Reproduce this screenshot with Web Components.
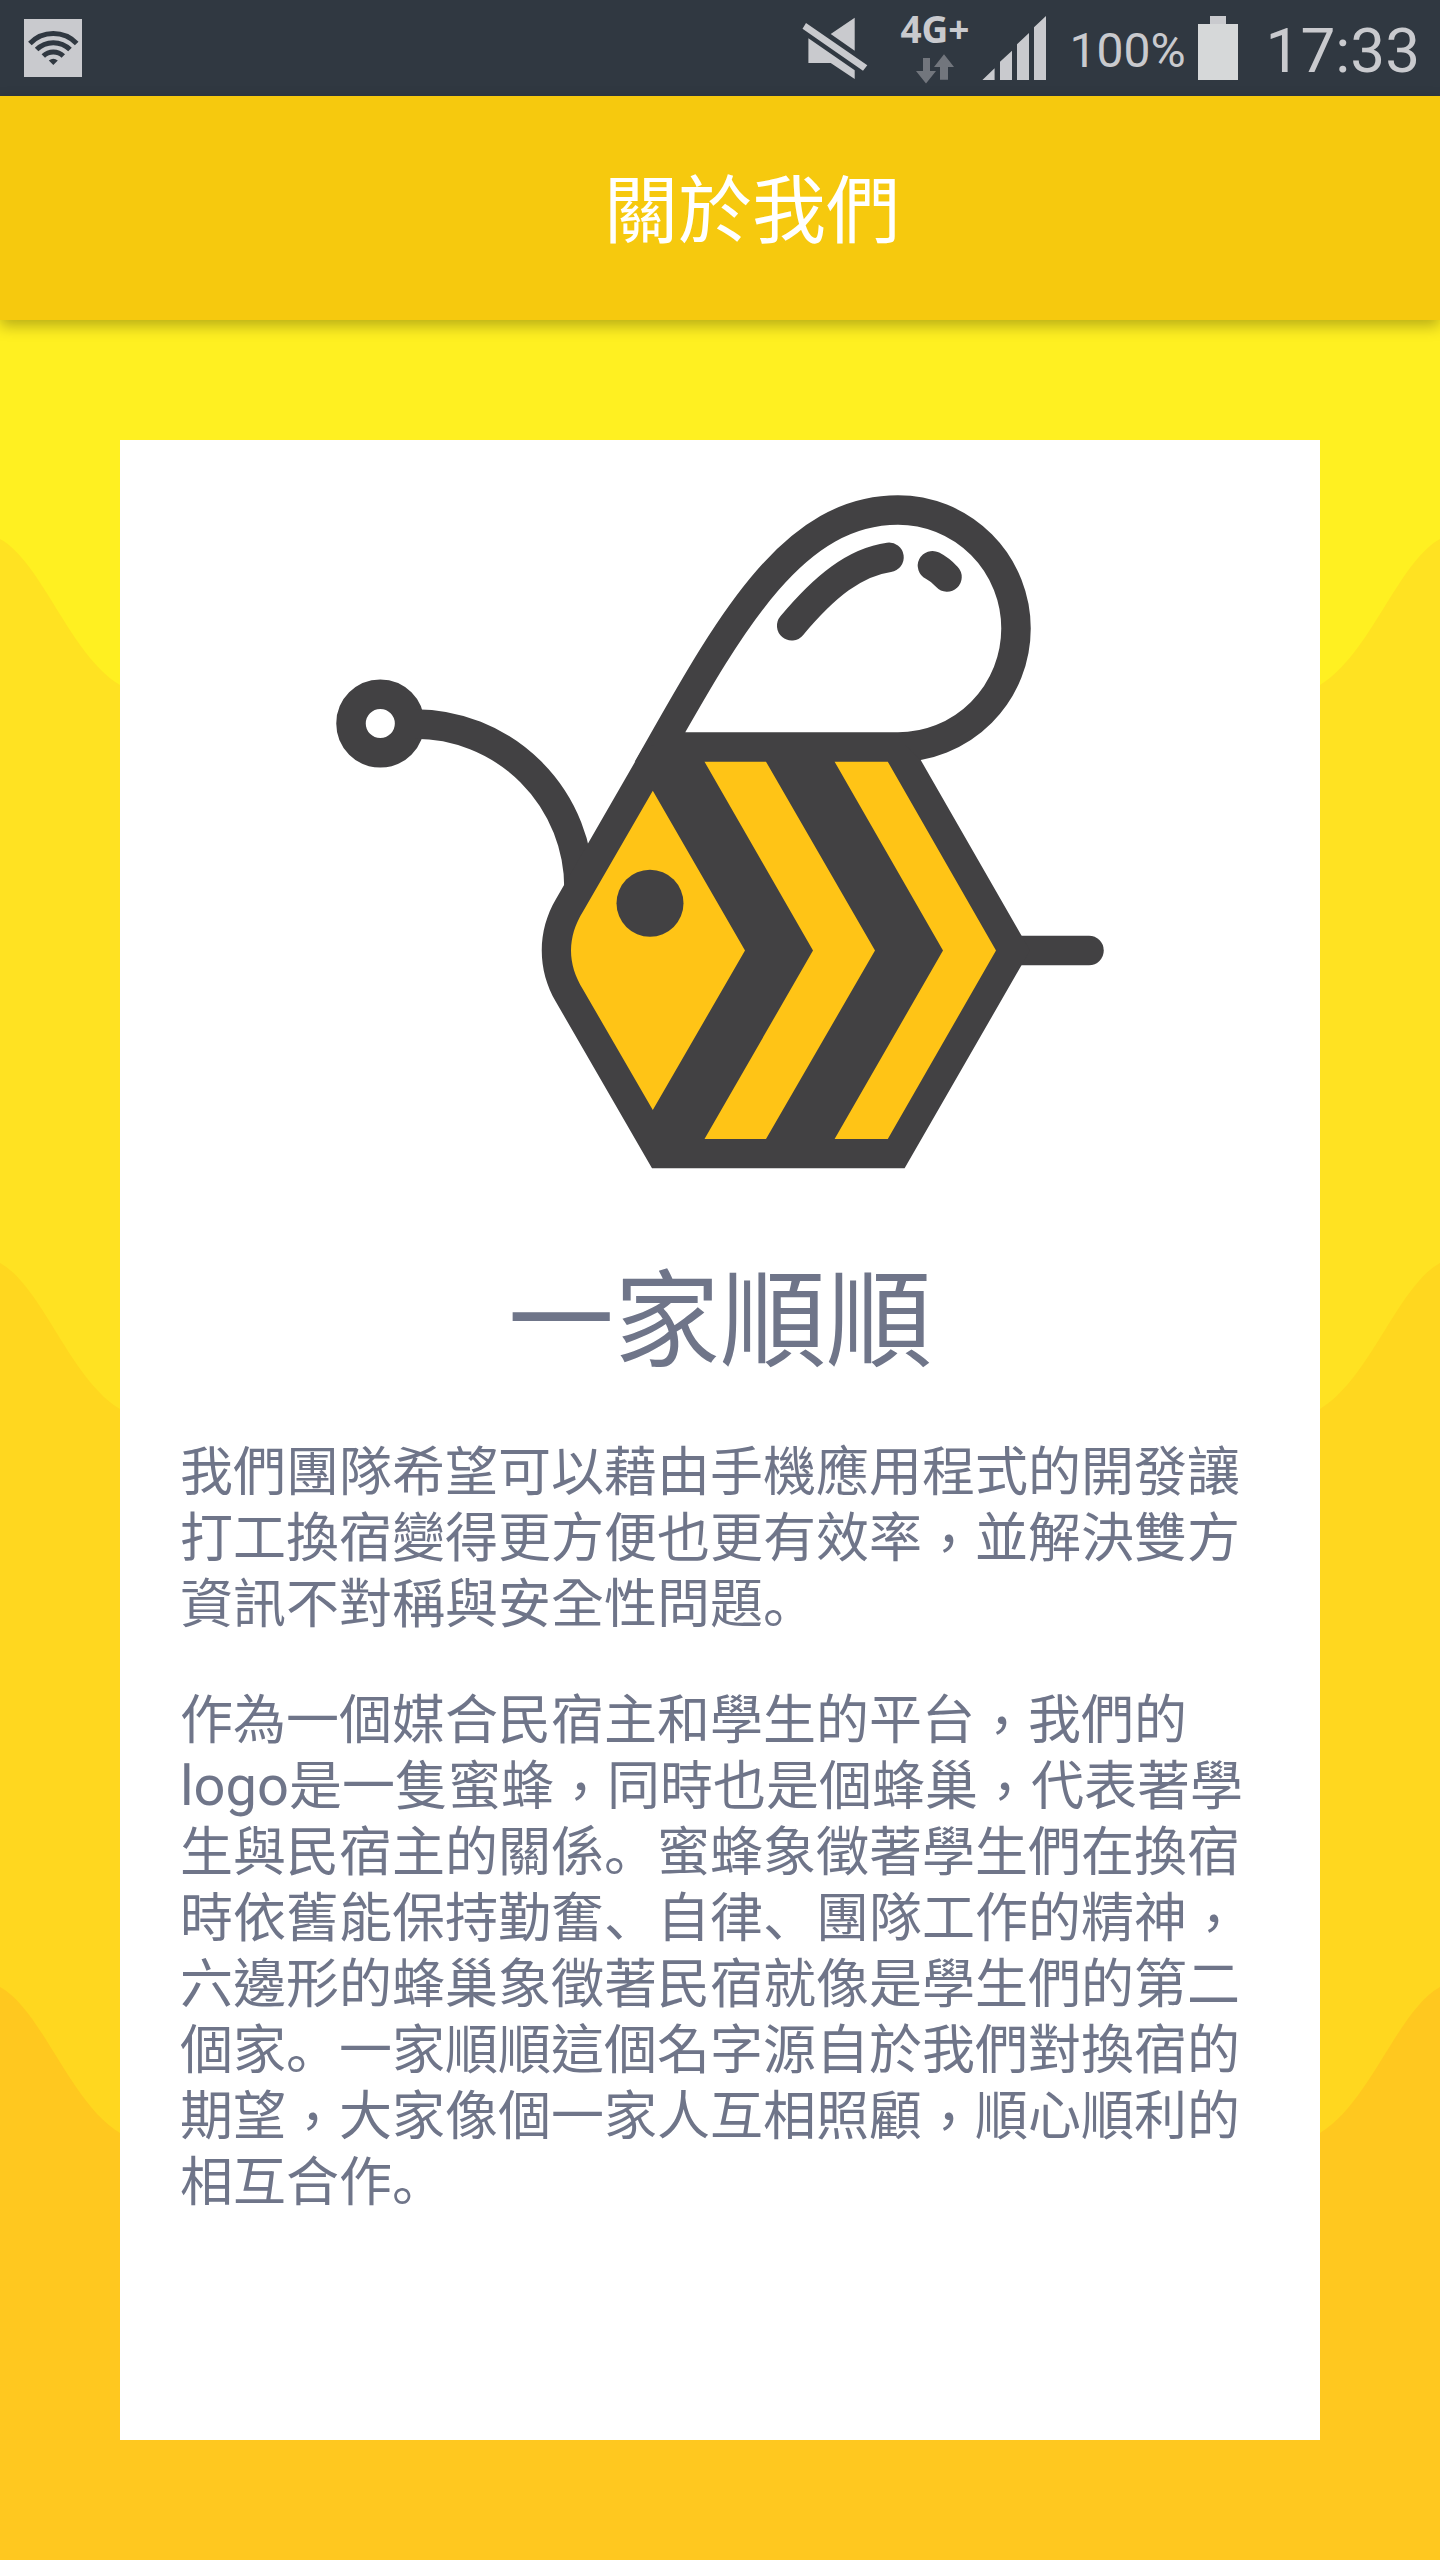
<!DOCTYPE html>
<html lang="zh-Hant">
<head>
<meta charset="utf-8">
<meta name="viewport" content="width=device-width, initial-scale=1">
<title>關於我們</title>
<style>
  body {
    margin: 0;
    font-family: Roboto, "Noto Sans CJK TC", sans-serif;
  }
</style>
</head>
<body>
<about-screen>
  <status-bar slot="status" network="4G+" battery="100%" time="17:33"></status-bar>
  <app-header slot="header">關於我們</app-header>
  <about-card>
    <bee-logo slot="logo"></bee-logo>
    <span slot="name">一家順順</span>
    <about-text>我們團隊希望可以藉由手機應用程式的開發讓打工換宿變得更方便也更有效率，並解決雙方資訊不對稱與安全性問題。</about-text>
    <about-text>作為一個媒合民宿主和學生的平台，我們的logo是一隻蜜蜂，同時也是個蜂巢，代表著學生與民宿主的關係。蜜蜂象徵著學生們在換宿時依舊能保持勤奮、自律、團隊工作的精神，六邊形的蜂巢象徵著民宿就像是學生們的第二個家。一家順順這個名字源自於我們對換宿的期望，大家像個一家人互相照顧，順心順利的相互合作。</about-text>
  </about-card>
</about-screen>

<script>
const define = (name, html, setup) => {
  const template = document.createElement('template');
  template.innerHTML = html;
  customElements.define(name, class extends HTMLElement {
    constructor() {
      super();
      this.attachShadow({ mode: 'open' }).append(template.content.cloneNode(true));
    }
    connectedCallback() {
      if (setup) setup(this, this.shadowRoot);
    }
  });
};

define('status-bar', `
  <style>
    :host {
      display: flex;
      align-items: center;
      height: 96px;
      padding: 0 20px 0 24px;
      box-sizing: border-box;
      background: #303841;
      color: #c9cace;
    }
    svg { display: block; fill: currentColor; }
    .wifi { margin-right: auto; }
    .net {
      display: flex;
      flex-direction: column;
      align-items: center;
      gap: 5px;
      margin: 0 12px 0 32px;
      padding-bottom: 4px;
      font: 700 37px/40px "Noto Sans", sans-serif;
    }
    .arrows { fill: #72767d; }
    .level, .time { padding-top: 4px; }
    .level { margin: 0 12px 0 24px; font-size: 48px; }
    .time { margin-left: 28px; font-size: 62px; }
    .battery { fill: #d6d8d9; }
  </style>
  <svg class="wifi" width="58" height="58" viewBox="24 19 58 58" role="img" aria-label="Wi-Fi">
    <path d="M24 19h58v58H24z"/>
    <g fill="none" stroke="#303841" stroke-width="5">
      <path d="M29.9 43.4A32.5 32.5 0 0 1 76.7 43.4"/>
      <path d="M36.6 49.6A23.5 23.5 0 0 1 70 49.6"/>
      <path d="M43.3 56A14.5 14.5 0 0 1 63.3 56"/>
    </g>
    <path fill="#303841" d="M53.3 65L48.8 60.5Q53.3 57 57.8 60.5Z"/>
  </svg>
  <svg width="66" height="66" viewBox="801 15 66 66" role="img" aria-label="靜音">
    <path d="M805 23L866.3 65.3 862 70.7 801.5 28.7ZM829.7 34L853.7 17.7V50.7ZM807.4 38.3V63H829.7L853.7 79V70.3Z"/>
  </svg>
  <div class="net">
    <span id="network"></span>
    <svg class="arrows" width="40" height="30" viewBox="916 53 40 30" aria-hidden="true">
      <path d="M924 57h7v13h6l-10 12.500-10-12.500h7zM941 78.700V66h-6l10-12.700L955 66h-6v12.700z"/>
    </svg>
  </div>
  <svg width="64" height="64" viewBox="982 16 64 64" role="img" aria-label="訊號">
    <path d="M982.400 80H994.600V68.300ZM1000 80V61.700L1012 50.700V80ZM1017 80V44.300L1029 33V80ZM1034 80V27.300L1046 16V80Z"/>
  </svg>
  <span class="level" id="battery"></span>
  <svg class="battery" width="40" height="66" viewBox="1198 14 40 66" aria-hidden="true">
    <path d="M1198 23h40v56h-40z"/><path fill="#c9cace" d="M1210 15h16v8h-16z"/>
  </svg>
  <span class="time" id="time"></span>
`, (host, root) => {
  for (const key of ['network', 'battery', 'time']) {
    root.getElementById(key).textContent = host.getAttribute(key);
  }
});

define('app-header', `
  <style>
    :host {
      display: flex;
      align-items: center;
      justify-content: center;
      position: relative;
      height: 224px;
      padding: 8px 0 0 64px;
      box-sizing: border-box;
      background: #f6c90e;
      box-shadow: 0 6px 14px rgba(0, 0, 0, .28);
      color: #fff;
    }
    h1 { margin: 0; font-size: 74px; font-weight: 400; line-height: 96px; }
  </style>
  <h1><slot></slot></h1>
`);

define('bee-logo', `
  <style>
    :host { display: block; }
    svg { display: block; width: 100%; height: auto; }
  </style>
  <svg viewBox="120 440 1200 816" role="img" aria-label="一家順順">
    <g fill="none" stroke="#424143" stroke-width="29.500">
      <circle cx="380.300" cy="723.500" r="29.300"/>
      <path d="M415 724A164 164 0 0 1 579 888"/>
      <path fill="#fff" d="M898 747A118 118.500 0 0 0 898 510C795 510 733 618 660 747Z"/>
      <path stroke-linecap="round" d="M791.700 625.700C825 586 855 562 889 557.300M932.500 565.700Q940 569.500 947 577"/>
      <path stroke-linecap="round" d="M1015 950.500H1089"/>
    </g>
    <path fill="#424143" d="M643 748L556 899C537 931 537 970 556 1002L652 1168.300H904.600L1030 950.500 920.700 760 905 745H655Z"/>
    <g fill="#ffc416">
      <path d="M652.800 790.700L745 950.500 652.800 1110 583 989.500C567 964 567 937 583 911.500Z"/>
      <path d="M704.500 761.700H766L875 950.500 766 1139H704.500L813 950.500Z"/>
      <path d="M834.600 761.700H887.800L996 950.500 887.800 1139H834.600L943 950.500Z"/>
    </g>
    <circle cx="650" cy="903.200" r="33.500" fill="#424143"/>
  </svg>
`);

// Stops and enumeration commas take the lower-left form, commas sit near the
// baseline, and Latin words run a little larger than the Han text.
define('about-text', `
  <style>
    :host { display: block; font-size: 53px; line-height: 66px; }
    p { margin: 0; }
    span { line-height: 1; }
    .stop { font-family: Roboto, "Noto Sans CJK SC", sans-serif; }
    .comma { vertical-align: -6px; }
    .latin { font-size: 56px; }
  </style>
  <p></p>
`, (host, root) => {
  const kinds = [
    [/^[。、]$/, 'stop', 'zh-Hans'],
    [/^，$/, 'comma', 'zh-Hant'],
    [/^[a-z]+$/, 'latin', 'en'],
  ];
  const parts = host.textContent.trim().split(/([。、，]|[a-z]+)/).filter(Boolean);
  root.querySelector('p').replaceChildren(...parts.map((part) => {
    const kind = kinds.find(([pattern]) => pattern.test(part));
    if (!kind) return part;
    const span = document.createElement('span');
    [, span.className, span.lang] = kind;
    span.textContent = part;
    return span;
  }));
});

define('about-card', `
  <style>
    :host {
      display: block;
      box-sizing: border-box;
      padding-bottom: 60px;
      background: #fff;
      color: #6f7589;
    }
    h2 {
      margin: 0 0 52px;
      font-size: 106px;
      font-weight: 400;
      line-height: 132px;
      text-align: center;
    }
    .copy { display: flex; flex-direction: column; gap: 50px; padding: 0 60px; }
  </style>
  <slot name="logo"></slot>
  <h2><slot name="name"></slot></h2>
  <div class="copy"><slot></slot></div>
`);

define('about-screen', `
  <style>
    :host { display: flex; flex-direction: column; min-height: 100vh; }
    main {
      flex: 1;
      display: grid;
      background: #fff021;
    }
    .waves, .content { grid-area: 1 / 1; }
    .waves { width: 100%; height: 100%; min-height: 0; contain: size; }
    .content { display: grid; padding: 120px; }
  </style>
  <slot name="status"></slot>
  <slot name="header"></slot>
  <main>
    <svg class="waves" viewBox="0 320 1440 2240" preserveAspectRatio="none" aria-hidden="true">
      <defs>
        <path id="wave" d="M0 539C42 562 70 655 120 685C220 740 1220 740 1320 685C1370 655 1398 562 1440 539V2560H0Z"/>
      </defs>
      <use href="#wave" fill="#ffe222"/>
      <use href="#wave" y="724" fill="#ffd71f"/>
      <use href="#wave" y="1448" fill="#ffc81f"/>
    </svg>
    <div class="content"><slot></slot></div>
  </main>
`);
</script>
</body>
</html>
